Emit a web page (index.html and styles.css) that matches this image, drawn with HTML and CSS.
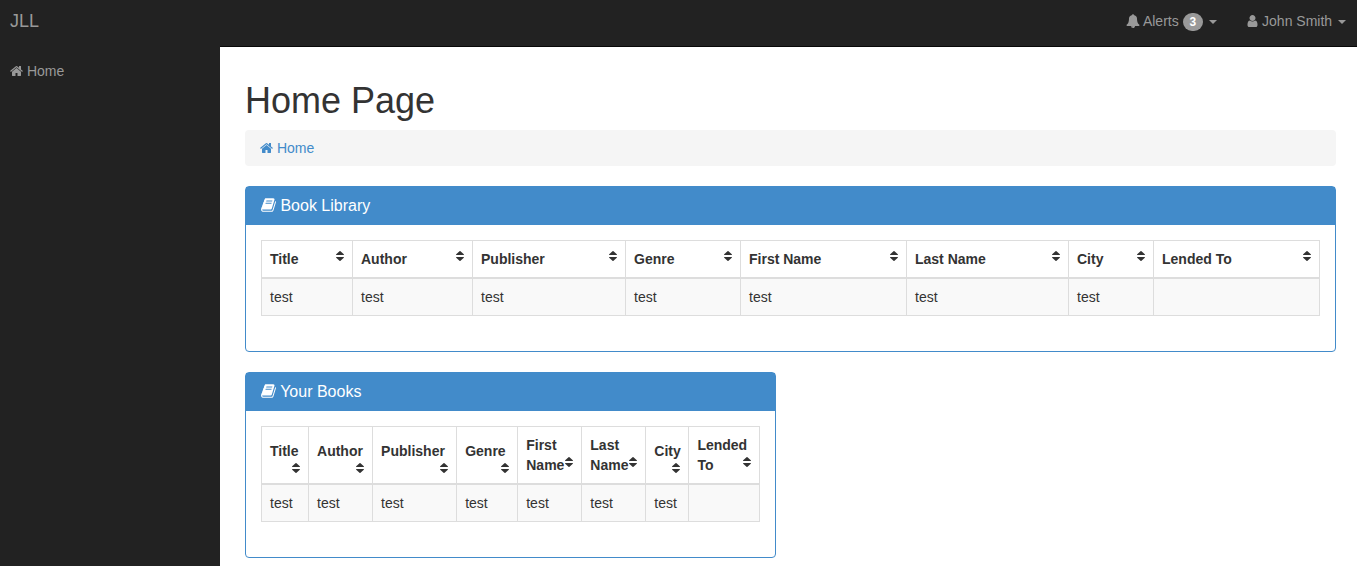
FILE: index.html
```html
<!DOCTYPE html>
<html lang="en">
<head>
<meta charset="utf-8">
<title>Home Page</title>
<link rel="stylesheet" href="styles.css">
</head>
<body>
<svg class="sprite" aria-hidden="true">
  <symbol id="home" viewBox="64 0 1664 1792"><path d="M1472 992v480q0 26-19 45t-45 19h-384v-384h-256v384h-384q-26 0-45-19t-19-45v-480q0-1 .5-3t.5-3l575-474 575 474q1 2 1 6zm223-69l-62 74q-8 9-21 11h-3q-13 0-21-7l-692-577-692 577q-12 8-24 7-13-2-21-11l-62-74q-8-10-7-23.5t11-21.5l719-599q32-26 76-26t76 26l244 204v-195q0-14 9-23t23-9h192q14 0 23 9t9 23v408l219 182q10 8 11 21.5t-7 23.5z"/></symbol>
  <symbol id="user" viewBox="256 0 1280 1792"><path d="M1536 1399q0 109-62.5 187t-150.5 78h-854q-88 0-150.5-78t-62.5-187q0-85 8.5-160.5t31.5-152 58.5-131 94-89 134.5-34.5q131 128 313 128t313-128q76 0 134.5 34.5t94 89 58.5 131 31.5 152 8.5 160.5zm-256-887q0 159-112.5 271.5t-271.5 112.5-271.5-112.5-112.5-271.5 112.5-271.5 271.5-112.5 271.5 112.5 112.5 271.5z"/></symbol>
  <symbol id="bell" viewBox="0 0 1792 1792"><path d="M912 1696q0-16-16-16-59 0-101.5-42.5t-42.5-101.5q0-16-16-16t-16 16q0 73 51.5 124.5t124.5 51.5q16 0 16-16zm816-288q0 52-38 90t-90 38h-448q0 106-75 181t-181 75-181-75-75-181h-448q-52 0-90-38t-38-90q50-42 91-88t85-119.5 74.5-158.5 50-206 19.5-260q0-152 117-282.5t307-158.5q-8-19-8-39 0-40 28-68t68-28 68 28 28 68q0 20-8 39 190 28 307 158.5t117 282.5q0 139 19.5 260t50 206 74.5 158.5 85 119.5 91 88z"/></symbol>
  <symbol id="book" viewBox="64 0 1664 1792"><path d="M1703 478q40 57 18 129l-275 906q-19 64-76.5 107.5t-122.5 43.5h-923q-77 0-148.5-53.5t-99.5-131.5q-24-67-2-127 0-4 3-27t4-37q1-8-3-21.5t-3-19.5q2-11 8-21t16.5-23.5 16.5-23.5q23-38 45-91.5t30-91.5q3-10 .5-30t-.5-28q3-11 17-28t17-23q21-36 42-92t25-90q1-9-2.5-32t.5-28q4-13 22-30.5t22-22.5q19-26 42.5-84.5t27.5-96.5q1-8-3-25.5t-2-26.5q2-8 9-18t18-23 17-21q8-12 16.5-30.5t15-35 16-36 19.5-32 26.5-23.5 36-11.5 47.5 5.5l-1 3q38-9 51-9h761q74 0 114 56t18 130l-274 906q-36 119-71.5 153.5t-128.5 34.5h-869q-27 0-38 15-11 16-1 43 24 70 144 70h923q29 0 56-15.5t35-41.5l300-987q7-22 5-57 38 15 59 43zm-1064 2q-4 13 2 22.5t20 9.5h608q13 0 25.5-9.5t16.5-22.5l21-64q4-13-2-22.5t-20-9.5h-608q-13 0-25.5 9.5t-16.5 22.5zm-83 256q-4 13 2 22.5t20 9.5h608q13 0 25.5-9.5t16.5-22.5l21-64q4-13-2-22.5t-20-9.5h-608q-13 0-25.5 9.5t-16.5 22.5z"/></symbol>
  <symbol id="sort" viewBox="0 0 8 12"><path d="M.4 5Q-.2 5 .2 4.300L3.500 1.200Q4 .8 4.500 1.200L7.800 4.300Q8.200 5 7.600 5zM.4 7Q-.2 7 .2 7.700L3.500 10.800Q4 11.200 4.500 10.800L7.800 7.700Q8.200 7 7.600 7z"/></symbol>
</svg>
<header class="navbar">
  <a class="brand" href="#">JLL</a>
  <nav class="user-nav">
    <button class="nav-button" type="button"><svg class="icon icon-bell"><use href="#bell"/></svg> Alerts <span class="badge">3</span> <span class="caret"></span></button>
    <button class="nav-button" type="button"><svg class="icon icon-user"><use href="#user"/></svg> John Smith <span class="caret"></span></button>
  </nav>
</header>
<div class="layout">
  <nav class="sidebar">
    <a class="side-link" href="#"><svg class="icon icon-home"><use href="#home"/></svg> Home</a>
  </nav>
  <main class="content">
    <h1 class="page-title">Home Page</h1>
    <nav class="breadcrumb"><a class="crumb" href="#"><svg class="icon icon-home"><use href="#home"/></svg> Home</a></nav>
    <div class="panels">
      <section class="panel panel-wide">
        <h2 class="panel-title"><svg class="icon icon-book"><use href="#book"/></svg> Book Library</h2>
        <div class="panel-body">
          <table class="books library">
            <colgroup><col class="c-title"><col class="c-author"><col class="c-publisher"><col class="c-genre"><col class="c-first"><col class="c-last"><col class="c-city"><col class="c-lended"></colgroup>
            <thead><tr>
              <th><button class="sorter" type="button">Title<svg class="sort"><use href="#sort"/></svg></button></th>
              <th><button class="sorter" type="button">Author<svg class="sort"><use href="#sort"/></svg></button></th>
              <th><button class="sorter" type="button">Publisher<svg class="sort"><use href="#sort"/></svg></button></th>
              <th><button class="sorter" type="button">Genre<svg class="sort"><use href="#sort"/></svg></button></th>
              <th><button class="sorter" type="button">First Name<svg class="sort"><use href="#sort"/></svg></button></th>
              <th><button class="sorter" type="button">Last Name<svg class="sort"><use href="#sort"/></svg></button></th>
              <th><button class="sorter" type="button">City<svg class="sort"><use href="#sort"/></svg></button></th>
              <th><button class="sorter" type="button">Lended To<svg class="sort"><use href="#sort"/></svg></button></th>
            </tr></thead>
            <tbody><tr><td>test</td><td>test</td><td>test</td><td>test</td><td>test</td><td>test</td><td>test</td><td></td></tr></tbody>
          </table>
        </div>
      </section>
      <section class="panel">
        <h2 class="panel-title"><svg class="icon icon-book"><use href="#book"/></svg> Your Books</h2>
        <div class="panel-body">
          <table class="books owned">
            <colgroup><col class="c-title"><col class="c-author"><col class="c-publisher"><col class="c-genre"><col class="c-first"><col class="c-last"><col class="c-city"><col class="c-lended"></colgroup>
            <thead><tr>
              <th><button class="sorter" type="button">Title<svg class="sort"><use href="#sort"/></svg></button></th>
              <th><button class="sorter" type="button">Author<svg class="sort"><use href="#sort"/></svg></button></th>
              <th><button class="sorter" type="button">Publisher<svg class="sort"><use href="#sort"/></svg></button></th>
              <th><button class="sorter" type="button">Genre<svg class="sort"><use href="#sort"/></svg></button></th>
              <th><button class="sorter" type="button">First Name<svg class="sort"><use href="#sort"/></svg></button></th>
              <th><button class="sorter" type="button">Last Name<svg class="sort"><use href="#sort"/></svg></button></th>
              <th><button class="sorter" type="button">City<svg class="sort"><use href="#sort"/></svg></button></th>
              <th><button class="sorter" type="button">Lended To<svg class="sort"><use href="#sort"/></svg></button></th>
            </tr></thead>
            <tbody><tr><td>test</td><td>test</td><td>test</td><td>test</td><td>test</td><td>test</td><td>test</td><td></td></tr></tbody>
          </table>
        </div>
      </section>
    </div>
  </main>
</div>
</body>
</html>
```
FILE: styles.css
```css
* { box-sizing: border-box; }
body {
  margin: 0;
  padding-right: 1px;
  background: #fff;
  color: #333;
  font: 14px/20px "Liberation Sans", Arial, sans-serif;
}
a { text-decoration: none; }
button { font: inherit; color: inherit; background: none; border: 0; padding: 0; cursor: pointer; }
.sprite { display: none; }
.icon { fill: currentColor; height: 14px; vertical-align: -2px; }
.icon-home { width: 13px; }
.icon-bell { width: 14px; }
.icon-user { width: 11px; }
.icon-book { width: 15px; height: 16px; }

.navbar {
  display: flex;
  justify-content: space-between;
  align-items: center;
  height: 47px;
  padding: 0 11px 4px 10px;
  background: #222;
  border-bottom: 1px solid #080808;
  color: #999;
}
.brand { color: #999; font-size: 18px; }
.user-nav { display: flex; gap: 30px; }
.badge {
  display: inline-block;
  padding: 3px 7px;
  border-radius: 10px;
  background: #999;
  color: #fff;
  font-size: 12px;
  font-weight: bold;
  line-height: 12px;
}
.caret {
  display: inline-block;
  margin-left: 2px;
  vertical-align: middle;
  border-top: 4px solid;
  border-left: 4px solid transparent;
  border-right: 4px solid transparent;
}

.layout { display: flex; }
.sidebar { width: 220px; flex: none; margin-top: -1px; padding: 15px 10px; background: #222; }
.side-link { display: block; color: #999; }
.content { flex: 1; min-width: 0; padding: 34px 21px 8px 25px; }
.page-title { margin: 0 0 9px; font-size: 36px; font-weight: normal; line-height: 40px; }
.breadcrumb { margin-bottom: 20px; padding: 8px 15px; border-radius: 4px; background: #f5f5f5; }
.crumb { color: #428bca; }

.panels { display: grid; grid-template-columns: 1fr 1fr; gap: 20px 30px; }
.panel { border: 1px solid #428bca; border-radius: 4px; min-width: 0; }
.panel-wide { grid-column: 1 / -1; }
.panel-title {
  margin: 0;
  padding: 10px 15px;
  background: #428bca;
  color: #fff;
  font-size: 16px;
  font-weight: normal;
  line-height: 18px;
}
.panel-body { padding: 15px 15px 35px; }

.books { width: 100%; table-layout: fixed; border-collapse: collapse; }
.books th, .books td { height: 37px; padding: 8px; border: 1px solid #ddd; text-align: left; }
.books th { border-bottom-width: 2px; }
.books td { background: #f9f9f9; }
.sorter { display: block; width: 100%; font-weight: bold; text-align: left; }
/* The negative margin keeps a wrapped arrow from adding a full line to the heading. */
.sort { float: right; width: 8px; height: 12px; margin: 1px 0 -5px; fill: #333; }

.library .c-title { width: 91px; }
.library .c-author { width: 120px; }
.library .c-publisher { width: 153px; }
.library .c-genre { width: 115px; }
.library .c-first { width: 166px; }
.library .c-last { width: 162px; }
.library .c-city { width: 85px; }
.library .c-lended { width: 166px; }

.owned .c-title { width: 47px; }
.owned .c-author { width: 64px; }
.owned .c-publisher { width: 84px; }
.owned .c-genre { width: 61px; }
.owned .c-first { width: 64px; }
.owned .c-last { width: 64px; }
.owned .c-city { width: 43px; }
.owned .c-lended { width: 70px; }
```
